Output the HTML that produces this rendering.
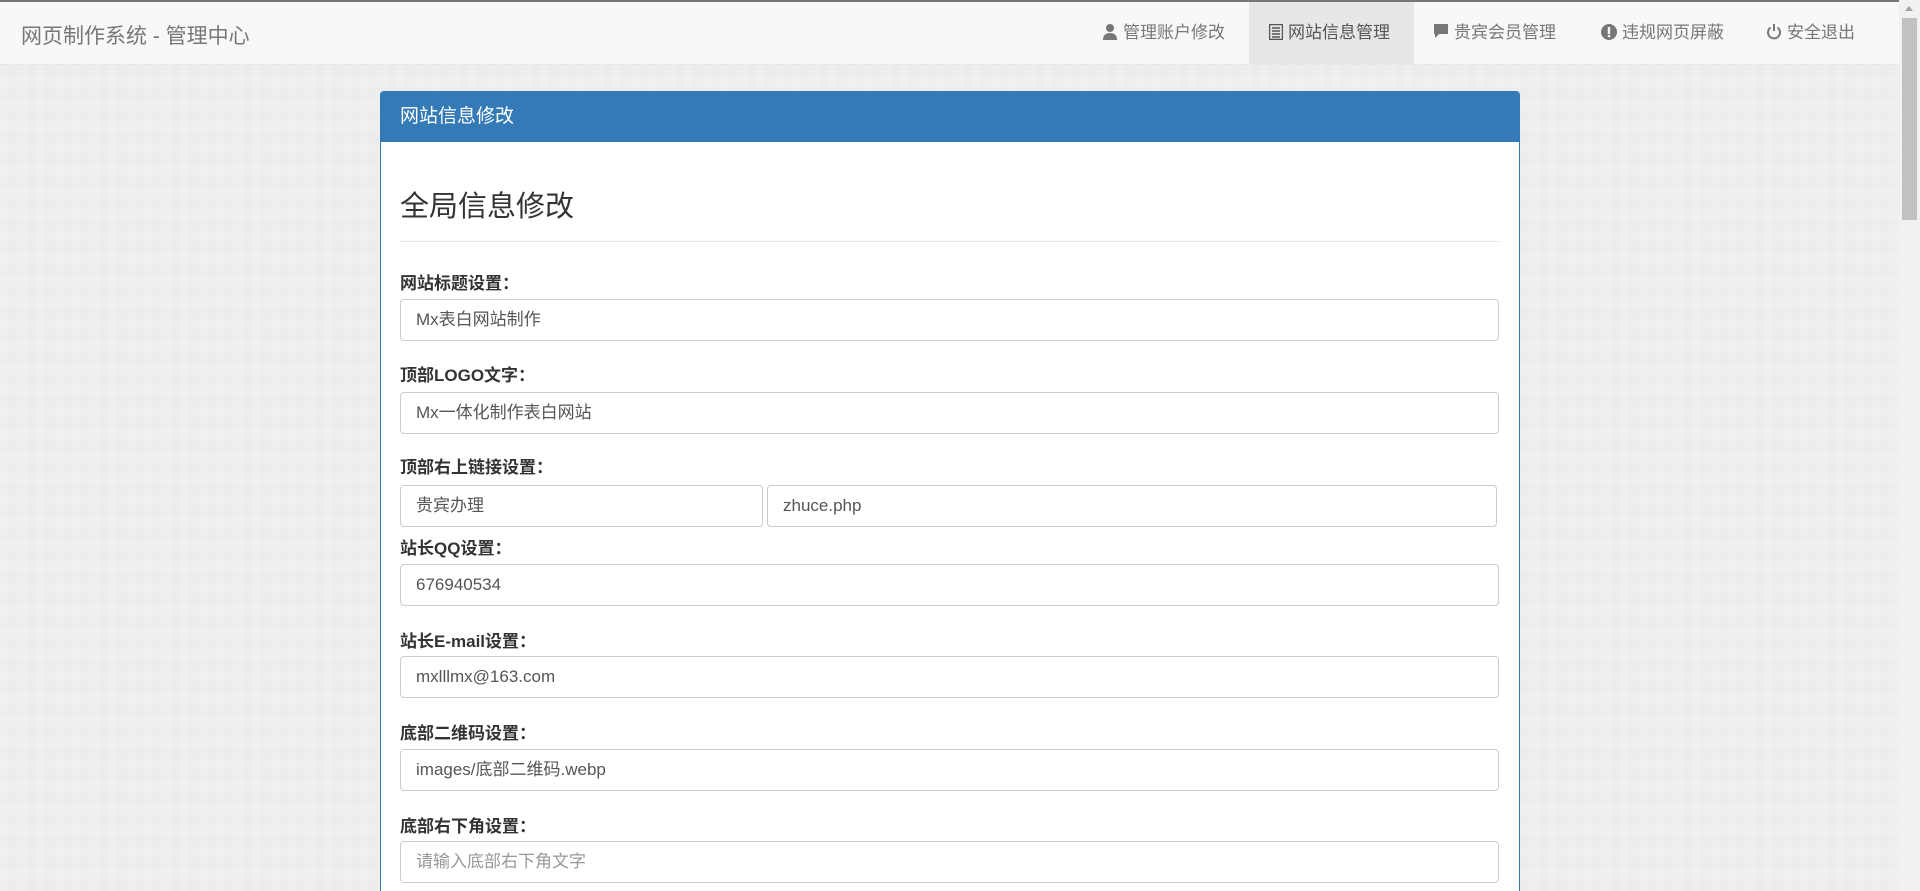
<!DOCTYPE html>
<html style="overflow:hidden;height:891px"><head><meta charset="utf-8"><style>
*{box-sizing:border-box;margin:0;padding:0}
body{width:1920px;height:891px;overflow:hidden}
.w{position:relative;width:1920px;height:891px;overflow:hidden;background:#eeeeee;font-family:"Liberation Sans","Noto Sans CJK SC",sans-serif;color:#333;
background-image:linear-gradient(90deg,rgba(255,255,255,.12) 50%,transparent 50%),linear-gradient(rgba(0,0,0,.008) 50%,transparent 50%);background-size:18px 18px,22px 22px}
.top{position:absolute;left:0;top:0;width:1899px;height:2px;background:#777}
.nav{position:absolute;left:0;top:2px;width:1899px;height:63px;background:#f8f8f8;border-bottom:1px solid #e7e7e7}
.brand{position:absolute;left:21px;top:18px;font-size:21px;color:#777}
.item{position:absolute;top:0;height:62px;line-height:62px;font-size:17px;color:#777;white-space:nowrap}
.item svg{vertical-align:-2px;margin-right:5px}
.active{background:#e7e7e7;color:#555}
.sb{position:absolute;right:0;top:0;width:21px;height:891px;background:#f1f1f1}
.sb .t{position:absolute;left:3px;top:18px;width:15px;height:202px;background:#c1c1c1}
.sb .a{position:absolute;left:6px;top:6px;width:0;height:0;border-left:4px solid transparent;border-right:4px solid transparent;border-bottom:5px solid #a3a3a3}
.panel{position:absolute;left:380px;top:91px;width:1140px;height:820px;background:#fff;border:1px solid #337ab7;border-radius:4px}
.ph{height:50px;background:#337ab7;color:#fff;font-size:19px;line-height:50px;padding-left:19px}
.h3{position:absolute;left:400px;top:183px;font-size:29px;color:#333}
.hr{position:absolute;left:400px;top:241px;width:1099px;height:1px;background:#e5e5e5}
.lbl{position:absolute;left:400px;font-size:17px;font-weight:bold;color:#333}
.in{position:absolute;height:42px;border:1px solid #ccc;border-radius:4px;background:#fff;font-size:17px;line-height:40px;padding-left:15px;color:#555}
.ph2{color:#999}
</style></head><body><div class="w">
<div class="top"></div>
<div class="nav">
<div class="brand">网页制作系统 - 管理中心</div>
<div class="item" style="left:1087px;padding:0 15px"><svg width="16" height="17" viewBox="0 0 16 17"><circle cx="8" cy="5" r="4" fill="#777"/><path d="M1 17 Q1 10 8 10 Q15 10 15 17Z" fill="#777"/></svg>管理账户修改</div>
<div class="item active" style="left:1249px;width:165px;padding-left:20px"><svg width="14" height="16" viewBox="0 0 14 16"><rect x="0.5" y="0.5" width="13" height="15" fill="none" stroke="#555" stroke-width="1.5"/><path d="M3 4h8M3 7h8M3 10h8M3 13h8" stroke="#555" stroke-width="1.5"/></svg>网站信息管理</div>
<div class="item" style="left:1433px"><svg width="16" height="17" viewBox="0 0 16 17"><path d="M1 1h14v10H6l-4 4v-4H1z" fill="#777"/></svg>贵宾会员管理</div>
<div class="item" style="left:1601px"><svg width="16" height="16" viewBox="0 0 16 16"><circle cx="8" cy="8" r="8" fill="#777"/><rect x="6.8" y="3" width="2.4" height="7" fill="#f8f8f8"/><rect x="6.8" y="11" width="2.4" height="2.2" fill="#f8f8f8"/></svg>违规网页屏蔽</div>
<div class="item" style="left:1766px"><svg width="16" height="17" viewBox="0 0 16 17"><path d="M4.5 4.5A6 6 0 1 0 11.5 4.5" fill="none" stroke="#777" stroke-width="2"/><path d="M8 1v7" stroke="#777" stroke-width="2"/></svg>安全退出</div>
</div>
<div class="sb"><div class="a"></div><div class="t"></div></div>
<div class="panel"><div class="ph">网站信息修改</div></div>
<div class="h3">全局信息修改</div>
<div class="hr"></div>
<div class="lbl" style="top:269px">网站标题设置：</div>
<div class="in" style="left:400px;top:299px;width:1099px">Mx表白网站制作</div>
<div class="lbl" style="top:361px">顶部LOGO文字：</div>
<div class="in" style="left:400px;top:392px;width:1099px">Mx一体化制作表白网站</div>
<div class="lbl" style="top:453px">顶部右上链接设置：</div>
<div class="in" style="left:400px;top:485px;width:363px">贵宾办理</div>
<div class="in" style="left:767px;top:485px;width:730px">zhuce.php</div>
<div class="lbl" style="top:534px">站长QQ设置：</div>
<div class="in" style="left:400px;top:564px;width:1099px">676940534</div>
<div class="lbl" style="top:627px">站长E-mail设置：</div>
<div class="in" style="left:400px;top:656px;width:1099px">mxlllmx@163.com</div>
<div class="lbl" style="top:719px">底部二维码设置：</div>
<div class="in" style="left:400px;top:749px;width:1099px">images/底部二维码.webp</div>
<div class="lbl" style="top:812px">底部右下角设置：</div>
<div class="in ph2" style="left:400px;top:841px;width:1099px">请输入底部右下角文字</div>
</div></body></html>
